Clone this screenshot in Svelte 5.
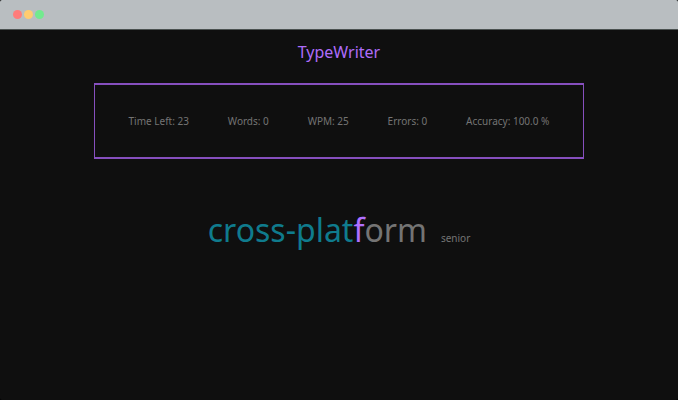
<script>
  const stats = ['Time Left: 23', 'Words: 0', 'WPM: 25', 'Errors: 0', 'Accuracy: 100.0 %'];
  const typed = 'cross-plat';
  const current = 'f';
  const rest = 'orm';
  const next = 'senior';
</script>

<div class="window">
  <header>
    <span class="dot red"></span>
    <span class="dot yellow"></span>
    <span class="dot green"></span>
  </header>
  <main>
    <h1>TypeWriter</h1>
    <section class="stats">
      {#each stats as stat}
        <span>{stat}</span>
      {/each}
    </section>
    <div class="words">
      <div class="word"><span class="typed">{typed}</span><span class="current">{current}</span>{rest}</div>
      <div class="next">{next}</div>
    </div>
  </main>
</div>

<style>
  :global(body) {
    margin: 0;
    background: #000;
  }
  .window {
    min-height: 100vh;
    overflow: hidden;
    border-radius: 2px;
    background: #0f0f0f;
    color: #747474;
    font-family: 'Noto Sans', sans-serif;
    font-size: 10px;
    line-height: 16px;
  }
  header {
    display: flex;
    box-sizing: border-box;
    align-items: center;
    gap: 2px;
    height: 30px;
    padding-left: 13px;
    border-bottom: 1px solid #4b5251;
    background: #b9bec1;
  }
  .dot {
    width: 9px;
    height: 9px;
    border-radius: 50%;
  }
  .red { background: #fe7c7b; }
  .yellow { background: #ffcc70; }
  .green { background: #72ea8e; }
  main {
    display: flex;
    flex-direction: column;
    align-items: center;
    padding-top: 10px;
  }
  h1 {
    margin: 0;
    color: #ae6cfa;
    font-size: 16px;
    font-weight: 400;
    line-height: 24px;
  }
  .stats {
    box-sizing: border-box;
    display: flex;
    justify-content: space-between;
    width: 72.4%;
    margin-top: 19px;
    padding: 28px 34px;
    border: solid #864fbe;
    border-width: 2px 1px;
  }
  .words {
    display: flex;
    align-items: baseline;
    gap: 14px;
    margin-top: 49px;
  }
  .word {
    font-size: 32px;
    line-height: 44px;
  }
  .typed { color: #0f7b8d; }
  .current { color: #b070ff; }
</style>
